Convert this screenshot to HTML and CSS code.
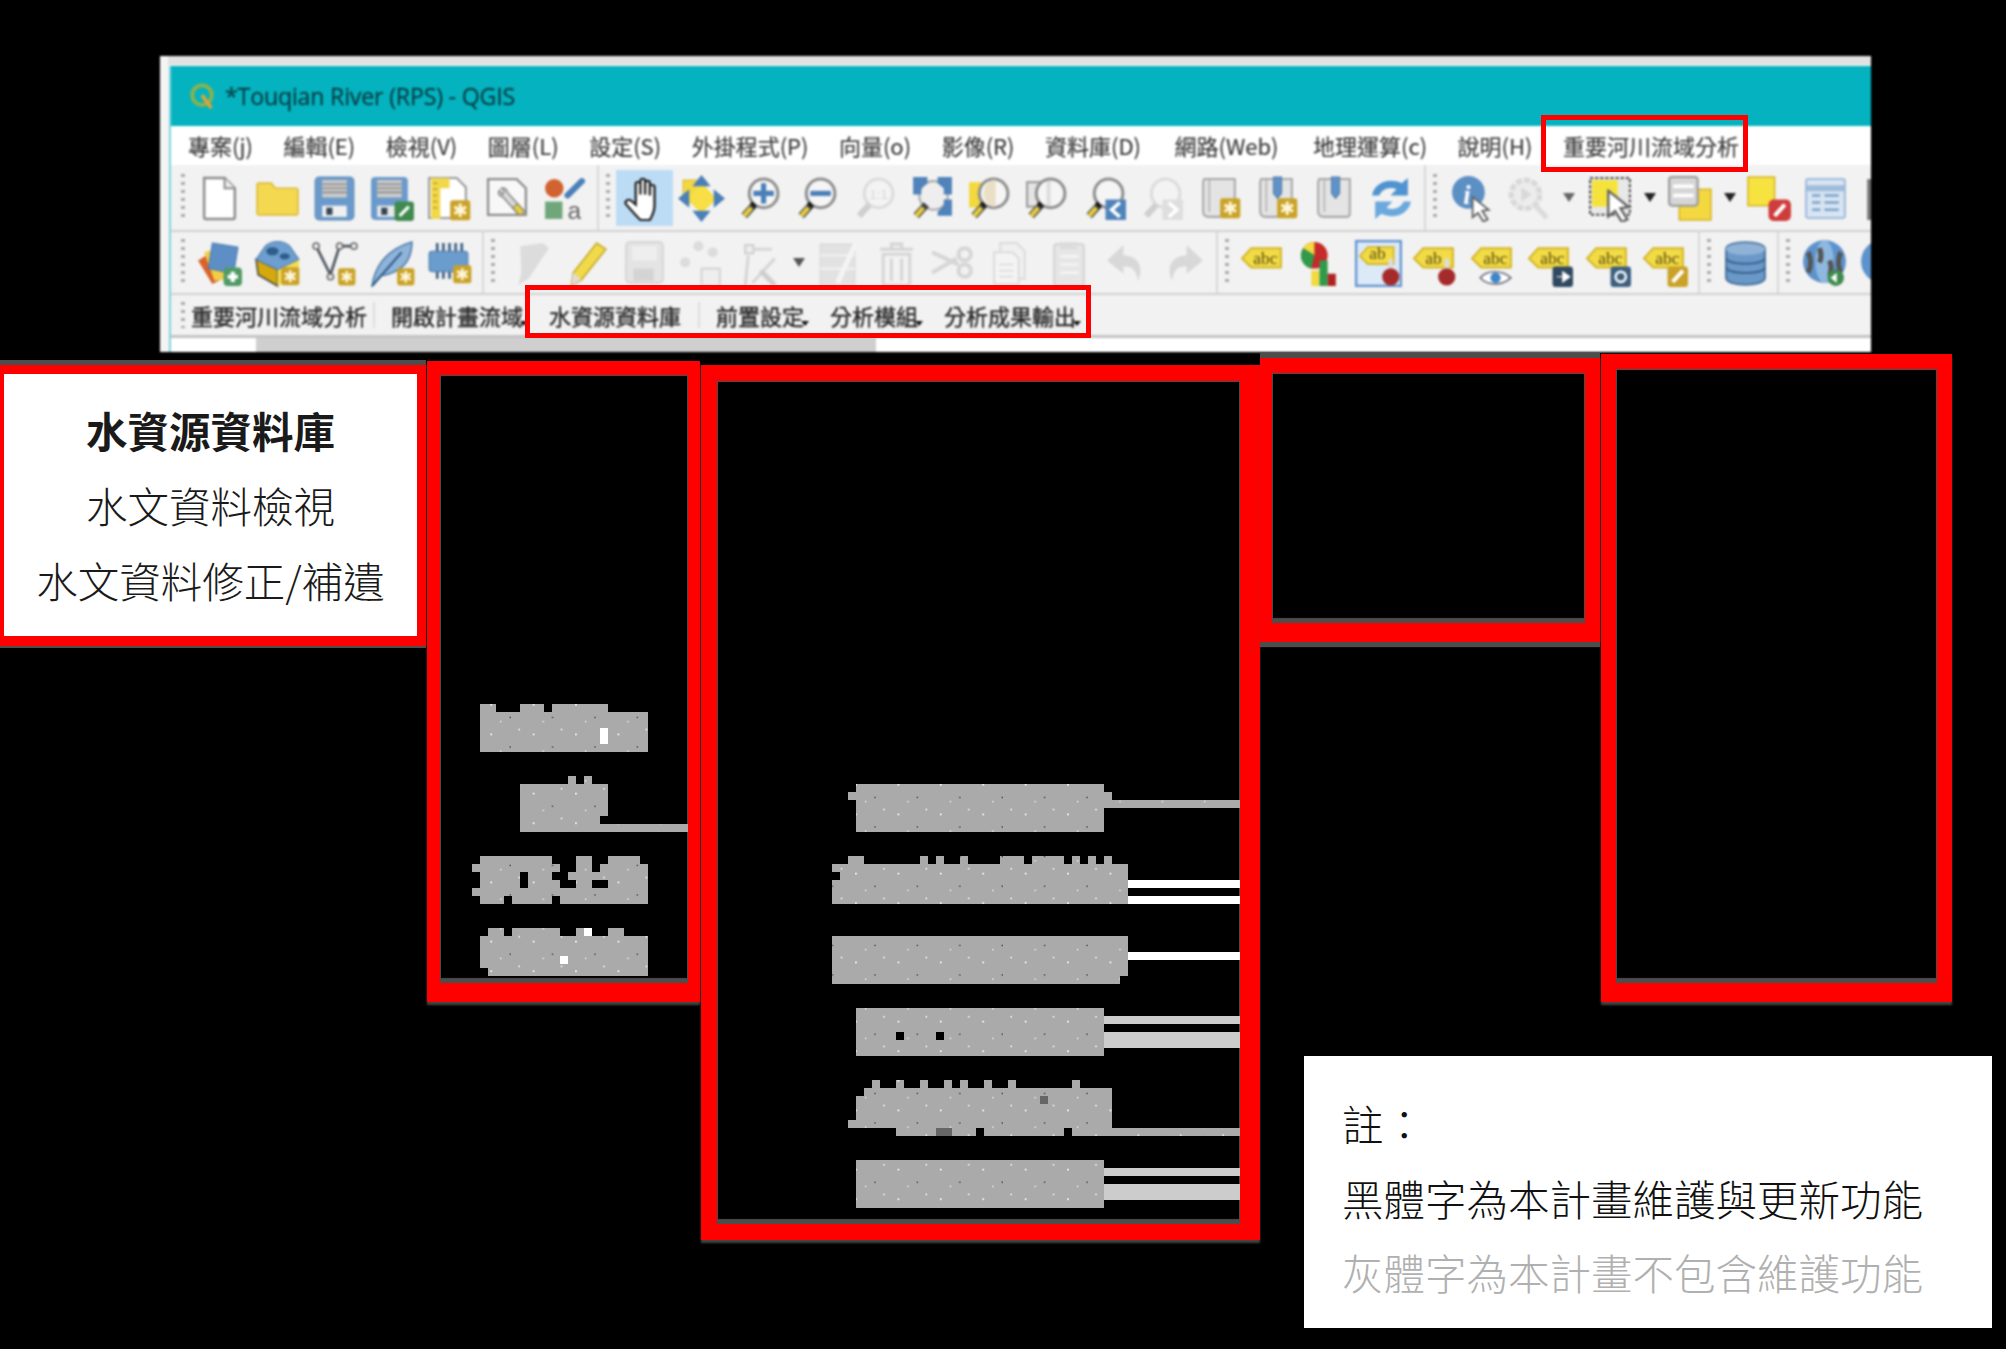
FILE: index.html
```html
<!DOCTYPE html>
<html lang="zh-Hant">
<head>
    <meta charset="UTF-8">
    <title>水資源資料庫</title>
    <link rel="stylesheet" href="styles.css">
</head>
<body>
<svg class="defs" width="0" height="0">
    <symbol id="badge" viewBox="0 0 16 16"><rect x=".5" y=".5" width="15" height="15" rx="2" fill="#c9a227"/><path d="M8 3v10M3.6 5.5l8.8 5M12.4 5.5l-8.8 5" stroke="#fff6d8" stroke-width="2.2"/></symbol>
    <symbol id="mag" viewBox="0 0 46 46"><circle cx="27" cy="18" r="14" fill="#f5f5f5" stroke="#8f8f8f" stroke-width="3"/><path d="M8 40L18 29" stroke="#444" stroke-width="7"/><path d="M8 40L15 32" stroke="#e3cb3f" stroke-width="4.5"/><path d="M16 30l2-2" stroke="#111" stroke-width="6"/></symbol>
    <symbol id="magoff" viewBox="0 0 46 46"><circle cx="27" cy="18" r="14" fill="#f3f3f3" stroke="#dcdcdc" stroke-width="3"/><path d="M8 40L18 29" stroke="#cfcfcf" stroke-width="6"/></symbol>
    <symbol id="scroll" viewBox="0 0 46 46"><path d="M8 4h30v34a3 3 0 0 1-3 3H13c-4 0-6-2-6-5V7z" fill="#e4e4e4" stroke="#a8a8a8" stroke-width="2"/><path d="M13 5v31" stroke="#bcbcbc" stroke-width="2"/></symbol>
    <symbol id="tag" viewBox="0 0 46 46"><path d="M2 18L11 8h29v19H11z" fill="#f2dc45" stroke="#d4b52a" stroke-width="2"/></symbol>
    <symbol id="cursor" viewBox="0 0 20 24"><path d="M2 1l15 12-6 1 5 8-4 2-5-8-5 4z" fill="#fff" stroke="#666" stroke-width="1.8"/></symbol>
    <symbol id="pin" viewBox="0 0 16 26"><path d="M8 2v10" stroke="#ddd" stroke-width="4"/><circle cx="8" cy="18" r="7.5" fill="#a52a2a"/></symbol>
    <pattern id="speck" width="5.3" height="3.7" patternUnits="userSpaceOnUse"><rect x="-1" y="-1" width="8" height="6" fill="#aaaaaa"/><rect x="1" y="1" width=".2" height=".2" fill="#fff"/><rect x="3.4" y="2.6" width=".15" height=".15" fill="#222"/><rect x="4.5" y=".4" width=".2" height=".2" fill="#eee"/><rect x="2.2" y="3.1" width=".2" height=".2" fill="#ddd"/></pattern>
</svg>

<div class="canvas">
    <div class="qgis">
        <div class="qgis-body">
            <div class="edge"></div>
            <div class="main">
                <div class="titlebar">
                    <svg class="logo" viewBox="0 0 30 30"><circle cx="15" cy="14" r="10.5" fill="none" stroke="#8fb24a" stroke-width="4"/><path d="M15 14l10 14" stroke="#d9a53a" stroke-width="4"/></svg>
                    <span>*Touqian River (RPS) - QGIS</span>
                </div>
                <div class="menubar">
                    <span>專案(j)</span><span>編輯(E)</span><span>檢視(V)</span><span>圖層(L)</span><span>設定(S)</span><span>外掛程式(P)</span><span>向量(o)</span><span>影像(R)</span><span class="pad-s">資料庫(D)</span><span class="pad-m">網路(Web)</span><span>地理運算(c)</span><span>說明(H)</span><span>重要河川流域分析</span>
                </div>

                <div class="toolbar row1">
                    <i class="grip"></i>
                    <div class="slot"><svg class="ic" viewBox="0 0 46 46"><path d="M8 3h20l10 10v28a2 2 0 0 1-2 2H10a2 2 0 0 1-2-2z" fill="#fff" stroke="#8c8c8c" stroke-width="2.4"/><path d="M28 3v10h10" fill="#eee" stroke="#8c8c8c" stroke-width="2"/></svg></div>
                    <div class="slot"><svg class="ic" viewBox="0 0 46 46"><path d="M3 10a2 2 0 0 1 2-2h12l4 5h20a2 2 0 0 1 2 2v22a2 2 0 0 1-2 2H5a2 2 0 0 1-2-2z" fill="#f3d850" stroke="#dcbc3c" stroke-width="1.6"/></svg></div>
                    <div class="slot"><svg class="ic" viewBox="0 0 46 46"><rect x="4" y="2" width="38" height="42" rx="4" fill="#6a9acb" stroke="#5c88b6" stroke-width="1"/><rect x="11" y="5" width="24" height="17" fill="#ccc"/><path d="M11 9h24M11 13h24M11 17h24" stroke="#888" stroke-width="1.5"/><rect x="11" y="30" width="24" height="11" fill="#f0f0f0"/><rect x="15" y="32" width="6" height="7" fill="#345"/></svg></div>
                    <div class="slot"><svg class="ic" viewBox="0 0 46 46"><rect x="2" y="2" width="36" height="42" rx="4" fill="#6a9acb"/><rect x="8" y="5" width="24" height="17" fill="#ccc"/><path d="M8 9h24M8 13h24M8 17h24" stroke="#888" stroke-width="1.5"/><rect x="8" y="30" width="18" height="11" fill="#e8e8e8"/><rect x="12" y="32" width="6" height="7" fill="#345"/><rect x="25" y="26" width="19" height="19" rx="3" fill="#3f8a4e"/><path d="M30 40l9-9" stroke="#fff" stroke-width="3"/></svg></div>
                    <div class="slot"><svg class="ic" viewBox="0 0 46 46"><path d="M3 3h27l9 9v30H3z" fill="#fff" stroke="#999" stroke-width="2"/><path d="M5 3h18v10H14v30H5z" fill="#f1d84a"/><path d="M7 8h4M7 14h4M7 20h4M7 26h4M7 32h4" stroke="#b89b22" stroke-width="1.5"/><use href="#badge" x="23" y="24" width="21" height="21"/></svg></div>
                    <div class="slot"><svg class="ic" viewBox="0 0 46 46"><path d="M4 4h28l9 9v26H4z" fill="#f8f8f8" stroke="#8c8c8c" stroke-width="2.2"/><path d="M15 15c-2 3 0 6 3 6l16 18 5-4-16-18c0-3-3-5-6-4l3 3-2 3z" fill="#d8d8d8" stroke="#888" stroke-width="1.4"/><path d="M28 32l7 8 5-4-7-8z" fill="#e4cc42" stroke="#777" stroke-width="1"/></svg></div>
                    <div class="slot"><svg class="ic" viewBox="0 0 46 46"><circle cx="13" cy="13" r="9" fill="#d2622f"/><path d="M26 20L40 6" stroke="#4a7fb8" stroke-width="6" stroke-linecap="round"/><rect x="4" y="26" width="17" height="17" fill="#6fa77a"/><text x="26" y="43" class="stylea">a</text></svg></div>
                    <i class="sep"></i><i class="grip"></i>
                    <div class="slot on"><svg class="ic" viewBox="0 0 46 46"><path transform="translate(-4 0) scale(1.15 1)" d="M20 44C16 40 12 34 8 29c-2-3 1-6 4-4l4 4V9c0-3 4-3 4 0v10V6c0-3 4-3 4 0v13V8c0-3 4-3 4 0v12V12c0-3 4-3 4 0v18c0 6-2 10-4 14z" fill="#fff" stroke="#222" stroke-width="2"/></svg></div>
                    <div class="slot"><svg class="ic" viewBox="0 0 46 46"><rect x="5" y="5" width="22" height="22" fill="#f3d83f" stroke="#d4b52a"/><path d="M23 8l15 15-15 15L8 23z" fill="#f7df45"/><path d="M23 0l9 11H14zM23 46l-9-11h18zM0 23l11-9v18zM46 23l-11 9V14z" fill="#4a7fb8"/></svg></div>
                    <div class="slot"><svg class="ic" viewBox="0 0 46 46"><use href="#mag" width="46" height="46"/><path d="M27 8v20M17 18h20" stroke="#4a7fb8" stroke-width="5"/></svg></div>
                    <div class="slot"><svg class="ic" viewBox="0 0 46 46"><use href="#mag" width="46" height="46"/><path d="M17 18h20" stroke="#4a7fb8" stroke-width="5"/></svg></div>
                    <div class="slot"><svg class="ic" viewBox="0 0 46 46"><use href="#magoff" width="46" height="46"/><text x="18" y="23" class="oneone">1:1</text></svg></div>
                    <div class="slot"><svg class="ic" viewBox="0 0 46 46"><circle cx="25" cy="20" r="14" fill="#eee" stroke="#aaa" stroke-width="2"/><path d="M5 2h14v6l-6 5v6H5zM43 2H29v6l6 5v6h8zM43 40H29v-4l6-6v-6h8z" fill="#4f83ba"/><path d="M8 40L18 29" stroke="#444" stroke-width="7"/><path d="M8 40L15 32" stroke="#e3cb3f" stroke-width="4.5"/></svg></div>
                    <div class="slot"><svg class="ic" viewBox="0 0 46 46"><rect x="3" y="7" width="20" height="25" fill="#f3d83f"/><use href="#mag" width="46" height="46"/><path d="M27 5h-1a14 14 0 0 0 0 26h3V5z" fill="#eadfc4"/></svg></div>
                    <div class="slot"><svg class="ic" viewBox="0 0 46 46"><rect x="4" y="7" width="24" height="24" fill="#e4e4e4" stroke="#999" stroke-width="2"/><use href="#mag" width="46" height="46"/><path d="M25 6v24" stroke="#ddd" stroke-width="4"/></svg></div>
                    <div class="slot"><svg class="ic" viewBox="0 0 46 46"><use href="#mag" width="46" height="46"/><rect x="24" y="24" width="20" height="20" fill="#4f83ba"/><path d="M38 27l-8 7 8 7" fill="none" stroke="#fff" stroke-width="3.5"/></svg></div>
                    <div class="slot"><svg class="ic" viewBox="0 0 46 46"><use href="#magoff" width="46" height="46"/><rect x="24" y="24" width="20" height="20" fill="#dedede"/><path d="M30 27l8 7-8 7" fill="none" stroke="#fff" stroke-width="3.5"/></svg></div>
                    <div class="slot"><svg class="ic" viewBox="0 0 46 46"><use href="#scroll" width="46" height="46"/><use href="#badge" x="23" y="22" width="21" height="21"/></svg></div>
                    <div class="slot"><svg class="ic" viewBox="0 0 46 46"><use href="#scroll" width="46" height="46"/><path d="M20 2h8v16l-4 5-4-5z" fill="#5f93c8" stroke="#4d7aa8"/><use href="#badge" x="23" y="22" width="21" height="21"/></svg></div>
                    <div class="slot"><svg class="ic" viewBox="0 0 46 46"><use href="#scroll" width="46" height="46"/><path d="M20 2h8v16l-4 5-4-5z" fill="#5f93c8" stroke="#4d7aa8"/></svg></div>
                    <div class="slot"><svg class="ic" viewBox="0 0 46 46"><path d="M4 20C6 8 20 2 33 8l6-5v17H22l6-6c-8-3-14 0-17 6z" fill="#4f93d1"/><path d="M42 26C40 38 26 44 13 38l-6 5V26h17l-6 6c8 3 14 0 17-6z" fill="#6aa8dd"/></svg></div>
                    <i class="sep"></i><i class="grip"></i>
                    <div class="slot"><svg class="ic" viewBox="0 0 46 46"><circle cx="20" cy="17" r="16" fill="#5c8fc4"/><text x="15" y="28" class="infoi">i</text><use href="#cursor" x="22" y="20" width="21" height="26"/></svg></div>
                    <div class="slot"><svg class="ic" viewBox="0 0 46 46"><circle cx="20" cy="19" r="14" fill="#ececec" stroke="#d8d8d8" stroke-width="5" stroke-dasharray="6 2"/><path d="M16 12l10 7-10 7z" fill="#d8d8d8"/><path d="M30 30l11 12" stroke="#dcdcdc" stroke-width="5"/></svg></div>
                    <div class="arrow first"></div>
                    <div class="slot"><svg class="ic" viewBox="0 0 46 46"><rect x="3" y="3" width="39" height="36" fill="#e8e8e8" stroke="#444" stroke-width="2" stroke-dasharray="3 2"/><rect x="5" y="5" width="25" height="26" fill="#f5e33c"/><use href="#cursor" x="18" y="14" width="27" height="32"/></svg></div>
                    <div class="arrow"></div>
                    <div class="slot"><svg class="ic" viewBox="0 0 46 46"><rect x="13" y="14" width="31" height="30" fill="#f3d83f" stroke="#d4b52a" stroke-width="1.5"/><rect x="3" y="2" width="28" height="28" rx="3" fill="#d6d6d6" stroke="#999" stroke-width="2"/><path d="M7 11h20M7 20h20" stroke="#fff" stroke-width="3.5"/></svg></div>
                    <div class="arrow"></div>
                    <div class="slot"><svg class="ic" viewBox="0 0 46 46"><rect x="2" y="2" width="26" height="28" fill="#f7e340" stroke="#d4b52a" stroke-width="1.5"/><rect x="22" y="24" width="22" height="21" rx="5" fill="#cf3c3c"/><path d="M28 40l10-11" stroke="#fff" stroke-width="4"/></svg></div>
                    <div class="slot"><svg class="ic" viewBox="0 0 46 46"><rect x="3" y="4" width="38" height="38" rx="2" fill="#d7e4f2" stroke="#9fbcdb" stroke-width="2"/><path d="M3 13h38" stroke="#9fbcdb" stroke-width="6"/><path d="M9 20h8M21 20h14M9 27h8M21 27h14M9 34h8M21 34h14" stroke="#7fa3c9" stroke-width="2.5"/></svg></div>
                    <div class="slot"><svg class="ic" viewBox="0 0 46 46"><rect x="6" y="4" width="34" height="40" fill="#777"/></svg></div>
                </div>

                <div class="toolbar row2">
                    <i class="grip"></i>
                    <div class="slot"><svg class="ic" viewBox="0 0 46 46"><path d="M2 20l10-6 14 24-10 5z" fill="#d9622b"/><path d="M8 12l14-4 10 30-14 2z" fill="#f0cf45"/><path d="M16 3l25 4-4 26-25-5z" fill="#5d8fc6" stroke="#477aae"/><rect x="27" y="27" width="18" height="18" rx="4" fill="#4f9a64"/><path d="M36 31v10M31 36h10" stroke="#fff" stroke-width="4"/></svg></div>
                    <div class="slot"><svg class="ic" viewBox="0 0 46 46"><path d="M2 19l21 10v16L4 34z" fill="#d5a90e" stroke="#444" stroke-width="1.5"/><path d="M23 29l21-10v15L23 45z" fill="#f4dd50"/><path d="M2 19L11 6c6-6 18-6 24 0l9 13-21 10z" fill="#6d9ed0" stroke="#557ea8"/><ellipse cx="18" cy="11" rx="6" ry="4" fill="#2f5d8a"/><ellipse cx="30" cy="16" rx="5" ry="3" fill="#2f5d8a"/><use href="#badge" x="26" y="26" width="19" height="19"/></svg></div>
                    <div class="slot"><svg class="ic" viewBox="0 0 46 46"><path d="M5 6l14 28L28 6h14" fill="none" stroke="#4d5560" stroke-width="2.6"/><circle cx="5" cy="6" r="3" fill="#eee" stroke="#666" stroke-width="1.5"/><circle cx="19" cy="36" r="3" fill="#eee" stroke="#666" stroke-width="1.5"/><circle cx="28" cy="6" r="3" fill="#eee" stroke="#666" stroke-width="1.5"/><circle cx="42" cy="6" r="3" fill="#eee" stroke="#666" stroke-width="1.5"/><use href="#badge" x="26" y="27" width="18" height="18"/></svg></div>
                    <div class="slot"><svg class="ic" viewBox="0 0 46 46"><path d="M3 45C5 30 14 10 42 2c0 20-12 30-30 33z" fill="#8fb4da" stroke="#4d7aa8" stroke-width="1.5"/><path d="M3 45L32 12" stroke="#2f5d8a" stroke-width="2"/><use href="#badge" x="27" y="27" width="18" height="18"/></svg></div>
                    <div class="slot"><svg class="ic" viewBox="0 0 46 46"><path d="M11 3v10M17 3v10M23 3v10M29 3v10M35 3v10M11 30v8M17 30v8M23 30v8" stroke="#33597f" stroke-width="2.5"/><rect x="3" y="11" width="38" height="20" rx="3" fill="#6a9ccd" stroke="#4d7aa8"/><use href="#badge" x="26" y="24" width="19" height="19"/></svg></div>
                    <i class="sep"></i><i class="grip"></i>
                    <div class="slot"><svg class="ic" viewBox="0 0 46 46"><path d="M14 6l22-3 6 5-20 30-10 6 3-12z" fill="#dcdcdc"/></svg></div>
                    <div class="slot"><svg class="ic" viewBox="0 0 46 46"><path d="M33 3l9 6-24 30-10 6 2-13z" fill="#f0da4a" stroke="#c5a728" stroke-width="1.5"/><path d="M8 45l2-13 8 7z" fill="#ddd"/></svg></div>
                    <div class="slot"><svg class="ic" viewBox="0 0 46 46"><rect x="5" y="2" width="36" height="40" rx="4" fill="#e4e4e4" stroke="#d6d6d6" stroke-width="2"/><rect x="11" y="6" width="24" height="14" fill="#eee"/><rect x="12" y="28" width="20" height="12" fill="#d4d4d4"/></svg></div>
                    <div class="slot"><svg class="ic" viewBox="0 0 46 46"><circle cx="20" cy="6" r="5" fill="#dcdcdc"/><circle cx="34" cy="12" r="5" fill="#dcdcdc"/><circle cx="7" cy="22" r="5" fill="#dcdcdc"/><rect x="23" y="28" width="18" height="17" fill="#eee" stroke="#d4d4d4" stroke-width="2"/></svg></div>
                    <div class="slot"><svg class="ic" viewBox="0 0 46 46"><rect x="9" y="5" width="8" height="8" fill="#eee" stroke="#cfcfcf" stroke-width="2"/><path d="M17 9h18M12 15l-3 30M38 18L16 42" stroke="#d6d6d6" stroke-width="3"/><path d="M24 30l14 14" stroke="#cfcfcf" stroke-width="5"/></svg></div>
                    <div class="arrow soft"></div>
                    <div class="slot"><svg class="ic" viewBox="0 0 46 46"><rect x="5" y="4" width="34" height="41" fill="#e2e2e2" stroke="#d4d4d4"/><path d="M5 15h34M5 28h34" stroke="#f2f2f2" stroke-width="2"/><path d="M40 3L22 42" stroke="#f4f4f4" stroke-width="5"/></svg></div>
                    <div class="slot"><svg class="ic" viewBox="0 0 46 46"><path d="M7 9h32M18 9V4h10v5" fill="none" stroke="#d4d4d4" stroke-width="3"/><path d="M10 14h26v30H10zM18 18v22M28 18v22" fill="none" stroke="#d6d6d6" stroke-width="3"/></svg></div>
                    <div class="slot"><svg class="ic" viewBox="0 0 46 46"><path d="M2 12l26 12M2 32l24-14" stroke="#d6d6d6" stroke-width="4"/><circle cx="34" cy="14" r="6" fill="none" stroke="#d6d6d6" stroke-width="4"/><circle cx="34" cy="30" r="6" fill="none" stroke="#d6d6d6" stroke-width="4"/></svg></div>
                    <div class="slot"><svg class="ic" viewBox="0 0 46 46"><path d="M12 3h16l8 8v27H12z" fill="#f0f0f0" stroke="#dcdcdc" stroke-width="2"/><path d="M6 12h18l6 6v25H6z" fill="#f4f4f4" stroke="#dcdcdc" stroke-width="2"/><path d="M11 24h14M11 30h14M11 36h14" stroke="#e0e0e0" stroke-width="2"/></svg></div>
                    <div class="slot"><svg class="ic" viewBox="0 0 46 46"><rect x="9" y="4" width="29" height="41" rx="3" fill="#e6e6e6" stroke="#d4d4d4" stroke-width="2"/><rect x="15" y="2" width="16" height="7" fill="#dcdcdc"/><path d="M15 16h18M15 24h18M15 32h18" stroke="#f5f5f5" stroke-width="2.5"/></svg></div>
                    <div class="slot"><svg class="ic" viewBox="0 0 46 46"><path d="M20 5L4 20l16 13v-7c7-1 13 2 14 14 6-12 2-24-14-25z" fill="#d8d8d8"/></svg></div>
                    <div class="slot"><svg class="ic" viewBox="0 0 46 46"><path d="M26 5l16 15-16 13v-7c-7-1-13 2-14 14-6-12-2-24 14-25z" fill="#d8d8d8"/></svg></div>
                    <i class="sep"></i><i class="grip"></i>
                    <div class="slot"><svg class="ic" viewBox="0 0 46 46"><use href="#tag" width="46" height="46"/><text x="13" y="23" class="abc">abc</text></svg></div>
                    <div class="slot"><svg class="ic" viewBox="0 0 46 46"><circle cx="17" cy="15" r="13" fill="#c62a2a"/><path d="M17 15V2a13 13 0 0 0-11 6z" fill="#f2da3f"/><path d="M17 15L6 8a13 13 0 0 0 8 20z" fill="#2f9a4a"/><rect x="14" y="30" width="8" height="15" fill="#f2da3f"/><rect x="22" y="20" width="8" height="25" fill="#2f9a4a"/><rect x="30" y="33" width="8" height="12" fill="#b02222"/></svg></div>
                    <div class="slot"><svg class="ic" viewBox="0 0 46 46"><rect x="1" y="1" width="44" height="44" fill="#dce9f6" stroke="#5f93d0" stroke-width="2.4"/><use href="#tag" x="3" y="0" width="40" height="40"/><text x="14" y="19" class="abc">ab</text><use href="#pin" x="26" y="16" width="18" height="29"/></svg></div>
                    <div class="slot"><svg class="ic" viewBox="0 0 46 46"><use href="#tag" width="46" height="46"/><text x="13" y="23" class="abc">ab</text><use href="#pin" x="25" y="15" width="18" height="31"/></svg></div>
                    <div class="slot"><svg class="ic" viewBox="0 0 46 46"><use href="#tag" width="46" height="46"/><text x="13" y="23" class="abc">abc</text><path d="M10 37c7-8 21-8 30 0-9 8-23 8-30 0z" fill="#fff" stroke="#667" stroke-width="1.5"/><circle cx="25" cy="37" r="5" fill="#3c86c9"/></svg></div>
                    <div class="slot"><svg class="ic" viewBox="0 0 46 46"><use href="#tag" width="46" height="46"/><text x="13" y="23" class="abc">abc</text><rect x="25" y="26" width="20" height="20" rx="3" fill="#2f4860"/><path d="M29 36h6v-5l7 5-7 5v-5z" fill="#fff" stroke="#fff"/></svg></div>
                    <div class="slot"><svg class="ic" viewBox="0 0 46 46"><use href="#tag" width="46" height="46"/><text x="13" y="23" class="abc">abc</text><rect x="25" y="26" width="20" height="20" rx="3" fill="#3c5f80"/><circle cx="35" cy="36" r="5" fill="none" stroke="#fff" stroke-width="2.5"/></svg></div>
                    <div class="slot"><svg class="ic" viewBox="0 0 46 46"><use href="#tag" width="46" height="46"/><text x="13" y="23" class="abc">abc</text><rect x="25" y="26" width="20" height="20" rx="3" fill="#c9a227"/><path d="M30 41l10-11" stroke="#fff" stroke-width="4"/></svg></div>
                    <i class="sep"></i><i class="grip"></i>
                    <div class="slot"><svg class="ic" viewBox="0 0 46 46"><path d="M4 9c0-9 38-9 38 0v28c0 9-38 9-38 0z" fill="#6a98c8" stroke="#4a749f" stroke-width="2"/><ellipse cx="23" cy="9" rx="19" ry="6" fill="#8fb2d6"/><path d="M4 18c3 7 35 7 38 0M4 27c3 7 35 7 38 0" fill="none" stroke="#3d6690" stroke-width="2"/></svg></div>
                    <i class="sep"></i><i class="grip"></i>
                    <div class="slot"><svg class="ic" viewBox="0 0 46 46"><circle cx="23" cy="21" r="21" fill="#5d93cc"/><ellipse cx="23" cy="21" rx="9" ry="21" fill="#8eb8e0"/><path d="M7 12c3 6 3 14 0 20M39 12c-3 6-3 14 0 20M18 8c2 5 2 10 0 14M28 20c2 5 2 10 0 15" stroke="#555" stroke-width="5" fill="none"/><circle cx="34" cy="37" r="8" fill="#3f8a4e"/><path d="M29 37l6-5v10z" fill="#fff"/></svg></div>
                    <div class="slot"><svg class="ic" viewBox="0 0 46 46"><circle cx="23" cy="21" r="21" fill="#5d93cc"/></svg></div>
                </div>

                <div class="toolbar row3">
                    <i class="grip short"></i>
                    <span class="ti">重要河川流域分析</span><i class="tsep"></i>
                    <span class="ti drop">開啟計畫流域</span>
                    <span class="ti wide">水資源資料庫</span><i class="tsep"></i>
                    <span class="ti drop">前置設定</span>
                    <span class="ti drop">分析模組</span>
                    <span class="ti drop">分析成果輸出</span>
                </div>
                <div class="scrollstrip"><i></i></div>
            </div>
        </div>
        <div class="mark mark-menu"></div>
        <div class="mark mark-tools"></div>
    </div>

    <div class="box box-a">
        <p class="strong">水資源資料庫</p>
        <p>水文資料檢視</p>
        <p>水文資料修正/補遺</p>
    </div>

    <div class="box box-b">
        <svg class="mosaic mosaic-b" viewBox="0 0 31 35" shape-rendering="crispEdges">
            <path fill="url(#speck)" d="M5 1H7V2H10V1H13V2H14V1H21V2H26V7H5Z"/>
            <path fill="url(#speck)" d="M16 10H17V11H18V10H19V11H21V15H20V16H31V17H10V11H16Z"/>
            <path fill="url(#speck)" d="M5 20H14V21H5ZM17 20H19V21H17ZM21 20H25V21H21ZM4 21H15V22H4ZM17 21H19V22H17ZM20 21H26V22H20ZM5 22H10V23H5ZM11 22H14V23H11ZM16 22H26V23H16ZM5 23H10V24H5ZM11 23H15V24H11ZM17 23H19V24H17ZM21 23H26V24H21ZM4 24H26V25H4ZM5 25H8V26H5ZM9 25H14V26H9ZM15 25H26V26H15Z"/>
            <path fill="url(#speck)" d="M6 29H8V30H9V29H15V30H17V29H19V30H21V29H23V30H26V35H6V34H5V30H6Z"/>
            <path class="white" d="M20 4h1v2h-1zM18 29h1v1h-1zM15 32.500h1v1h-1z"/>
        </svg>
    </div>

    <div class="box box-c">
        <svg class="mosaic mosaic-c" viewBox="0 0 65 54" shape-rendering="crispEdges">
            <path fill="url(#speck)" fill-rule="evenodd" d="M17 1H48V2H49V3H65V4H48V7H17V3H16V2H17ZM16 10H18V11H25V10H26V11H27V10H28V11H30V10H31V11H35V10H38V11H39V10H43V11H44V10H45V11H46V10H47V11H48V10H49V11H51V16H14V13H15V12H14V11H16ZM14 20H51V25H50V26H14ZM17 29H48V35H17ZM22 32V33H23V32ZM27 32V33H28V32ZM19 38H20V39H22V38H23V39H25V38H26V39H28V38H29V39H30V38H31V39H33V38H34V39H36V38H37V39H44V38H45V39H49V44H65V45H44V44H43V45H33V44H32V45H22V44H16V43H17V40H18V39H19ZM17 48H48V54H17Z"/>
            <path class="white" d="M51 13H65V14H51ZM51 15H65V16H51ZM51 22H65V23H51Z"/>
            <path class="light" d="M48 30H65V31H48ZM48 32H65V34H48ZM48 49H65V50H48ZM48 51H65V53H48Z"/>
            <path class="dark" d="M27 44h2v1h-2zM40 40h1v1h-1z"/>
        </svg>
    </div>

    <div class="box box-d"></div>
    <div class="box box-e"></div>

    <div class="note">
        <p>註：</p>
        <p>黑體字為本計畫維護與更新功能</p>
        <p class="muted">灰體字為本計畫不包含維護功能</p>
    </div>
</div>
</body>
</html>
```

FILE: styles.css
```css
body {
    margin: 0;
    background-color: #000000;
    font-family: "Noto Sans CJK TC", "Noto Sans", sans-serif;
    overflow: hidden;
}

p {
    margin: 0;
}

.defs {
    display: block;
}

.canvas {
    position: relative;
    width: 2006px;
    height: 1349px;
    overflow: hidden;
}

/* qgis window */
.qgis {
    position: absolute;
    left: 160px;
    top: 56px;
    width: 1711px;
    height: 296px;
}

.qgis-body {
    height: 100%;
    background-color: #f4f4f4;
    overflow: hidden;
    filter: blur(0.8px);
}

.edge {
    height: 10px;
    margin-left: 8px;
    background-color: #e2e2e2;
    border-bottom: 1px solid #f4f4f4;
    box-sizing: border-box;
}

.main {
    margin-left: 9px;
    border-left: 2px solid #7dd4de;
    height: 286px;
    overflow: hidden;
}

.titlebar {
    height: 60px;
    background-color: #04b3bf;
    display: flex;
    align-items: center;
    gap: 9px;
    padding-left: 17px;
    color: #0a3f47;
    font-family: "Open Sans", sans-serif;
    font-size: 23.2px;
    letter-spacing: -0.2px;
    -webkit-text-stroke: 0.3px #0a3f47;
}

.logo {
    width: 28px;
    height: 28px;
}

.menubar {
    height: 39px;
    background-color: #ffffff;
    display: flex;
    align-items: center;
    gap: 30.5px;
    padding-left: 17px;
    color: #3c3c3c;
    font-size: 22px;
    line-height: 39px;
    white-space: nowrap;
    -webkit-text-stroke: 0.2px #3c3c3c;
}

.menubar .pad-s {
    margin-right: 3px;
}

.menubar .pad-m {
    margin-right: 4px;
}

.toolbar {
    display: flex;
    align-items: center;
    box-sizing: border-box;
    padding-left: 10px;
    background-color: #f2f2f2;
    border-bottom: 2px solid #d2d2d2;
    white-space: nowrap;
}

.row1 {
    height: 67px;
}

.row2 {
    height: 63px;
}

.row3 {
    height: 43px;
    border-bottom: 3px solid #c4c4c4;
    color: #262626;
    font-size: 22px;
    -webkit-text-stroke: 0.35px #262626;
}

.grip {
    flex: none;
    width: 4px;
    height: 48px;
    margin-right: 6px;
    background: repeating-linear-gradient(#aaaaaa 0 3px, transparent 3px 8px);
}

.grip.short {
    height: 26px;
}

.sep {
    flex: none;
    width: 2px;
    height: 100%;
    margin: 0 7px 0 3px;
    background-color: #d8d8d8;
}

.slot {
    flex: none;
    width: 57.5px;
    height: 56px;
    display: flex;
    align-items: center;
    justify-content: center;
}

.slot.on {
    background-color: #bcdcf6;
}

.ic {
    width: 47px;
    height: 47px;
    margin-top: 2px;
}

.arrow {
    flex: none;
    width: 22px;
    height: 8px;
    position: relative;
}

.arrow::after {
    content: "";
    position: absolute;
    left: 5px;
    top: -1px;
    border-top: 9px solid #222222;
    border-left: 6px solid transparent;
    border-right: 6px solid transparent;
}

.arrow.first {
    width: 24px;
}

.arrow.first::after {
    border-top-color: #666666;
}

.arrow.soft::after {
    border-top-color: #555555;
}

.abc {
    font-family: "Liberation Serif", serif;
    font-size: 17px;
    fill: #5a4a10;
}

.stylea {
    font-family: "Liberation Sans", sans-serif;
    font-size: 24px;
    fill: #666666;
}

.oneone {
    font-family: "Liberation Sans", sans-serif;
    font-size: 13px;
    fill: #d8d8d8;
}

.infoi {
    font-family: "Liberation Serif", serif;
    font-style: italic;
    font-weight: bold;
    font-size: 26px;
    fill: #ffffff;
}

.ti {
    position: relative;
    margin-right: 26px;
    line-height: 40px;
}

.ti.wide {
    margin-right: 37px;
}

.ti.drop::after {
    content: "";
    position: absolute;
    right: -5px;
    bottom: 9px;
    border-top: 5px solid #111111;
    border-left: 4px solid transparent;
    border-right: 4px solid transparent;
}

.tsep {
    flex: none;
    width: 2px;
    height: 26px;
    margin: 0 16px 0 -20px;
    background-color: #dddddd;
}

.scrollstrip {
    height: 14px;
    background-color: #ffffff;
    padding-left: 85px;
}

.scrollstrip i {
    display: block;
    width: 620px;
    height: 100%;
    background-color: #cfcfcf;
}

.mark {
    position: absolute;
    box-sizing: border-box;
    border: 5px solid #ff0000;
}

.mark-menu {
    left: 1381px;
    top: 59px;
    width: 207px;
    height: 57px;
}

.mark-tools {
    left: 365px;
    top: 229px;
    width: 566px;
    height: 53px;
}

/* red boxes under the window */
.box {
    position: absolute;
    box-sizing: border-box;
    border: 13px solid #ff0000;
    background-color: #000000;
    box-shadow: 0 3px 2px #444444, inset 0 -5px 1px #4d4d4d, inset 0 0 0 1px #4d4d4d;
}

.box-a {
    left: -9px;
    top: 365px;
    width: 435px;
    height: 281px;
    border-width: 9px 9px 10px 13px;
    background-color: #ffffff;
    box-shadow: 0 -5px 0 #4d4d4d, 0 2px 0 #4d4d4d;
    display: flex;
    flex-direction: column;
    align-items: center;
    justify-content: center;
    font-size: 41.5px;
    line-height: 75px;
    font-weight: 300;
    color: #1a1a1a;
}

.box-a .strong {
    font-weight: bold;
}

.box-b {
    left: 427px;
    top: 361px;
    width: 273px;
    height: 641px;
    border-width: 14px 12px 19px 13px;
}

.box-c {
    left: 701px;
    top: 365px;
    width: 559px;
    height: 875px;
    border-width: 16px 20px 16px 16px;
}

.box-d {
    left: 1260px;
    top: 358px;
    width: 340px;
    height: 284px;
    border-width: 15px 15px 19px 12px;
    box-shadow: 0 -5px 0 #4d4d4d, 0 5px 1px #4d4d4d, inset 0 -5px 1px #4d4d4d, inset 0 0 0 1px #4d4d4d;
}

.box-e {
    left: 1601px;
    top: 354px;
    width: 351px;
    height: 648px;
    border-width: 15px 15px 19px 15px;
}

.mosaic {
    display: block;
    filter: blur(0.3px);
}

.mosaic-b {
    width: 248px;
    height: 280px;
    margin-top: 321px;
}

.mosaic-c {
    width: 520px;
    height: 432px;
    margin: 395px 0 0 3px;
}

.white {
    fill: #ffffff;
}

.light {
    fill: #cccccc;
}

.dark {
    fill: #666666;
}

.note {
    position: absolute;
    left: 1304px;
    top: 1056px;
    width: 688px;
    height: 272px;
    box-sizing: border-box;
    padding: 30px 0 0 38px;
    background-color: #ffffff;
    color: #111111;
    font-size: 41.5px;
    line-height: 74.5px;
    font-weight: 300;
}

.note .muted {
    color: #b0b0b0;
}
```
